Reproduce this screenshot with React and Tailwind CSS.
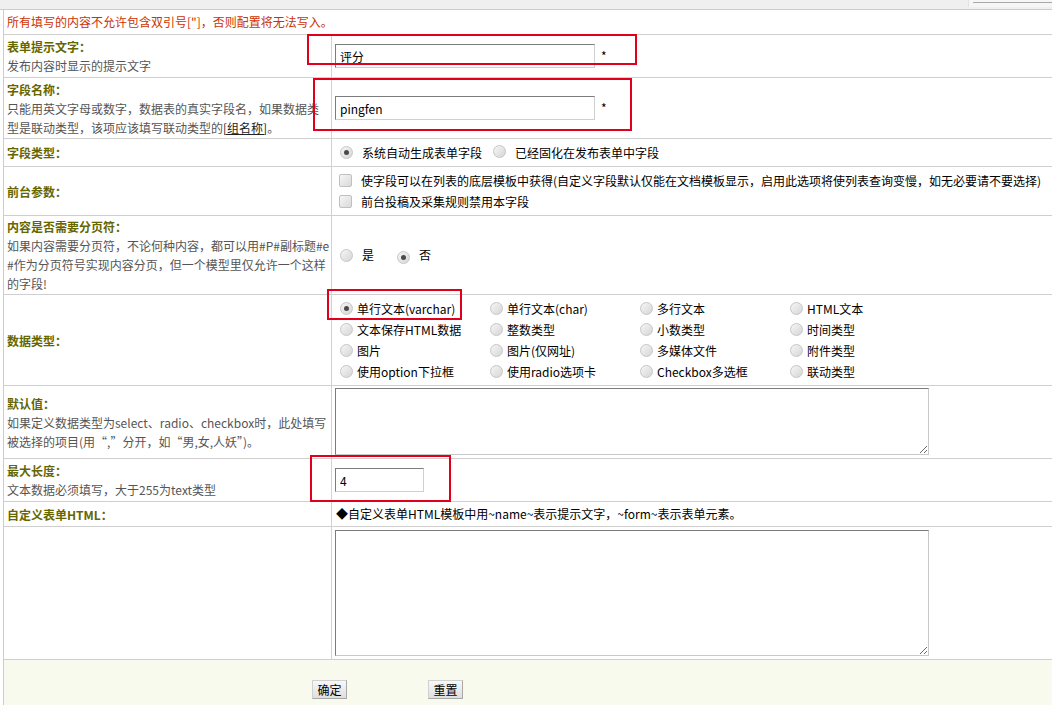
import React from "react";

const Radio = ({ checked }) => (
  <span className="inline-flex items-center justify-center w-[13px] h-[13px] shrink-0 rounded-full border border-[#c6c6c6] bg-linear-to-br from-[#f6f6f6] to-[#d6d6d6]">
    {checked && <span className="w-[5px] h-[5px] rounded-full bg-[#4a4a4a]" />}
  </span>
);

const Check = () => (
  <span className="inline-block w-[13px] h-[13px] shrink-0 rounded-[2px] border border-[#c0c0c0] bg-linear-to-br from-[#f6f6f6] to-[#d9d9d9]" />
);

const Row = ({ h, left, children, rightClass = "" }) => (
  <div className={`flex border-b border-[#cfcfcf] ${h}`}>
    <div className="w-[328px] shrink-0 flex flex-col justify-center pl-[3px] border-r border-[#d2d2d2] overflow-hidden leading-[19px]">
      {left}
    </div>
    <div className={`flex-1 flex ${rightClass}`}>{children}</div>
  </div>
);

const Label = ({ children }) => (
  <div className="font-bold text-[#666600] whitespace-nowrap">{children}</div>
);

const Desc = ({ children }) => (
  <div className="text-[#555] whitespace-nowrap">{children}</div>
);

const inputCls =
  "h-[24px] border border-t-[#7c7c7c] border-l-[#7c7c7c] border-r-[#d0d0d0] border-b-[#d0d0d0] bg-white px-[4px] text-[12px] text-black outline-none";

const textareaCls =
  "w-[594px] border border-t-[#7c7c7c] border-l-[#7c7c7c] border-r-[#c8c8c8] border-b-[#c8c8c8] bg-white outline-none";

const dataTypes = [
  ["单行文本(varchar)", true],
  ["单行文本(char)"],
  ["多行文本"],
  ["HTML文本"],
  ["文本保存HTML数据"],
  ["整数类型"],
  ["小数类型"],
  ["时间类型"],
  ["图片"],
  ["图片(仅网址)"],
  ["多媒体文件"],
  ["附件类型"],
  ["使用option下拉框"],
  ["使用radio选项卡"],
  ["Checkbox多选框"],
  ["联动类型"],
];

const App = () => {
  return (
    <div className="relative w-[1052px] h-[705px] overflow-hidden bg-white text-[12px] text-[#222] font-['Noto_Sans_CJK_SC',sans-serif]">
      {/* top strip */}
      <div className="flex h-[10px] bg-[#efefef] border-b border-[#cccccc]">
        <div className="ml-auto w-[84px] h-[7px] border-l border-[#e2e2e2] bg-[#f6f6f6]">
          <div className="mt-[2px] ml-[4px] border-t border-[#a8a8a8]" />
        </div>
      </div>

      <div className="ml-[3px] border-l border-[#cccccc]">
        <div className="flex items-center h-[25px] pl-[3px] border-b border-[#cfcfcf] text-[#cc3300] whitespace-nowrap">
          所有填写的内容不允许包含双引号["]，否则配置将无法写入。
        </div>

        <Row
          h="h-[43px]"
          rightClass="items-center pl-[3px]"
          left={
            <>
              <Label>表单提示文字：</Label>
              <Desc>发布内容时显示的提示文字</Desc>
            </>
          }
        >
          <input className={`${inputCls} w-[260px]`} defaultValue="评分" />
          <span className="ml-[6px] text-black">*</span>
        </Row>

        <Row
          h="h-[61px]"
          rightClass="items-center pl-[3px]"
          left={
            <>
              <Label>字段名称：</Label>
              <Desc>只能用英文字母或数字，数据表的真实字段名，如果数据类</Desc>
              <Desc>
                型是联动类型，该项应该填写联动类型的
                <span className="underline text-[#222]">[组名称]</span>。
              </Desc>
            </>
          }
        >
          <input className={`${inputCls} w-[260px]`} defaultValue="pingfen" />
          <span className="ml-[6px] text-black">*</span>
        </Row>

        <Row
          h="h-[28px]"
          rightClass="items-center pl-[8px] text-black"
          left={<Label>字段类型：</Label>}
        >
          <Radio checked />
          <span className="ml-[9px]">系统自动生成表单字段</span>
          <span className="ml-[11px]">
            <Radio />
          </span>
          <span className="ml-[9px]">已经固化在发布表单中字段</span>
        </Row>

        <Row
          h="h-[49px]"
          rightClass="flex-col justify-center pl-[7px] text-black"
          left={<Label>前台参数：</Label>}
        >
          <div className="flex items-center h-[21px] whitespace-nowrap">
            <Check />
            <span className="ml-[9px]">
              使字段可以在列表的底层模板中获得(自定义字段默认仅能在文档模板显示，启用此选项将使列表查询变慢，如无必要请不要选择)
            </span>
          </div>
          <div className="flex items-center h-[21px] whitespace-nowrap">
            <Check />
            <span className="ml-[9px]">前台投稿及采集规则禁用本字段</span>
          </div>
        </Row>

        <Row
          h="h-[79px]"
          rightClass="items-center pl-[8px] text-black"
          left={
            <>
              <Label>内容是否需要分页符：</Label>
              <Desc>如果内容需要分页符，不论何种内容，都可以用#P#副标题#e</Desc>
              <Desc>#作为分页符号实现内容分页，但一个模型里仅允许一个这样</Desc>
              <Desc>的字段!</Desc>
            </>
          }
        >
          <Radio />
          <span className="ml-[9px]">是</span>
          <span className="ml-[23px]">
            <Radio checked />
          </span>
          <span className="ml-[9px]">否</span>
        </Row>

        <Row
          h="h-[91px]"
          rightClass="items-center pl-[8px] text-black"
          left={<Label>数据类型：</Label>}
        >
          <div className="grid grid-cols-[150px_150px_150px_150px]">
            {dataTypes.map(([name, checked], i) => (
              <div key={i} className="flex items-center gap-[4px] h-[21px] whitespace-nowrap">
                <Radio checked={checked} />
                <span>{name}</span>
              </div>
            ))}
          </div>
        </Row>

        <Row
          h="h-[73px]"
          rightClass="pl-[3px] pt-[2px]"
          left={
            <>
              <Label>默认值：</Label>
              <Desc>如果定义数据类型为select、radio、checkbox时，此处填写</Desc>
              <Desc>被选择的项目(用“,”分开，如“男,女,人妖”)。</Desc>
            </>
          }
        >
          <textarea className={`${textareaCls} h-[67px]`} />
        </Row>

        <Row
          h="h-[43px]"
          rightClass="items-center pl-[3px]"
          left={
            <>
              <Label>最大长度：</Label>
              <Desc>文本数据必须填写，大于255为text类型</Desc>
            </>
          }
        >
          <input className={`${inputCls} w-[89px]`} defaultValue="4" />
        </Row>

        <Row
          h="h-[25px]"
          rightClass="items-center pl-[4px] text-black whitespace-nowrap"
          left={<Label>自定义表单HTML：</Label>}
        >
          ◆自定义表单HTML模板中用~name~表示提示文字，~form~表示表单元素。
        </Row>

        <Row h="h-[133px]" rightClass="pl-[3px] pt-[3px]" left={null}>
          <textarea className={`${textareaCls} h-[126px]`} />
        </Row>

        <div className="flex h-[45px] bg-[#f8faee] pl-[308px] pt-[20px] gap-[81px]">
          <button className="w-[35px] h-[19px] border border-[#d0d0d0] border-r-[#a8a8a8] border-b-[#a8a8a8] bg-linear-to-b from-[#f8f8f8] to-[#dedede] text-[12px] text-black leading-[17px]">
            确定
          </button>
          <button className="w-[35px] h-[19px] border border-[#d0d0d0] border-r-[#a8a8a8] border-b-[#a8a8a8] bg-linear-to-b from-[#f8f8f8] to-[#dedede] text-[12px] text-black leading-[17px]">
            重置
          </button>
        </div>
      </div>

      {/* red annotation boxes */}
      <div className="absolute left-[307px] top-[34px] w-[330px] h-[31px] border-2 border-[#e0001b] pointer-events-none" />
      <div className="absolute left-[313px] top-[78px] w-[319px] h-[53px] border-2 border-[#e0001b] pointer-events-none" />
      <div className="absolute left-[327px] top-[289px] w-[135px] h-[31px] border-2 border-[#e0001b] pointer-events-none" />
      <div className="absolute left-[310px] top-[455px] w-[141px] h-[47px] border-2 border-[#e0001b] pointer-events-none" />
    </div>
  );
};

export default App;
